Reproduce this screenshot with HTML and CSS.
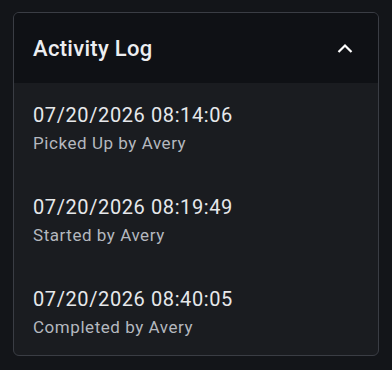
FILE: index.html
```html
<!DOCTYPE html>
<html lang="en">
<head>
  <meta charset="UTF-8">
  <title>Activity Log</title>
  <meta name="viewport" content="width=device-width, initial-scale=1.0">
  <link rel="stylesheet" href="styles.css">
</head>
<body>
<div class="card">
  <div class="card-header">
    <h3>Activity Log</h3>
    <button class="toggle" aria-label="Collapse">
      <svg width="16" height="10" viewBox="0 0 16 10"><path d="M1.5 9 L8 2.5 L14.5 9" fill="none" stroke="#ffffff" stroke-width="2.2"/></svg>
    </button>
  </div>
  <div class="card-body">
    <div class="entry">
      <div class="stamp">07/20/2026 08:14:06</div>
      <div class="action">Picked Up by Avery</div>
    </div>
    <div class="entry">
      <div class="stamp">07/20/2026 08:19:49</div>
      <div class="action">Started by Avery</div>
    </div>
    <div class="entry">
      <div class="stamp">07/20/2026 08:40:05</div>
      <div class="action">Completed by Avery</div>
    </div>
  </div>
</div>
</body>
</html>
```

FILE: styles.css
```css
* { box-sizing: border-box; }
body {
  margin: 0;
  background: #131519;
  font-family: Roboto, "Noto Sans", sans-serif;
  padding: 12px 13px;
}

.card {
  border: 1px solid #3a3d44;
  border-radius: 6px;
  overflow: hidden;
  background: #1a1c20;
}

.card-header {
  display: flex;
  align-items: center;
  justify-content: space-between;
  height: 70px;
  padding: 0 25px 0 19px;
  background: #0f1115;
}

h3 {
  margin: 0;
  font-size: 22px;
  font-weight: 500;
  letter-spacing: 0.3px;
  color: #eceef1;
}

.toggle {
  background: none;
  border: none;
  padding: 0;
  display: flex;
  cursor: pointer;
}

.card-body {
  display: flex;
  flex-direction: column;
  gap: 42px;
  padding: 20px 19px 18px;
}

.stamp {
  font-size: 20px;
  line-height: 24px;
  letter-spacing: 0.6px;
  color: #e6e8eb;
}

.action {
  margin-top: 6px;
  font-size: 17px;
  line-height: 20px;
  letter-spacing: 0.55px;
  color: #b4b8bf;
}
```
